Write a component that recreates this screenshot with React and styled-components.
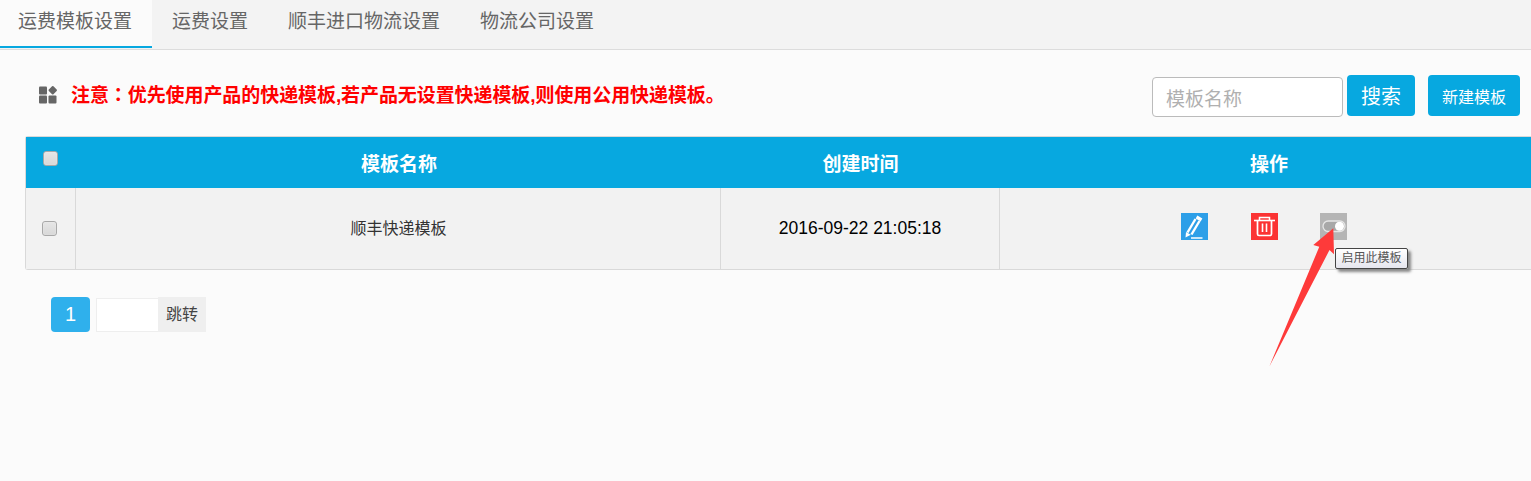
import React from 'react';
import styled, { createGlobalStyle } from 'styled-components';

const GlobalStyle = createGlobalStyle`
    html, body {
        margin: 0;
        padding: 0;
        background: #fbfbfb;
        font-family: "Liberation Sans", "Noto Sans CJK SC", sans-serif;
    }
`;

const Page = styled.div`
    width: 1531px;
    height: 481px;
    overflow: hidden;
    position: relative;
`;
const Tabs = styled.div`
    display: flex;
    height: 49px;
    background: #f3f3f3;
    border-bottom: 1px solid #dcdcdc;
`;
const Tab = styled.div`
    box-sizing: border-box;
    height: ${(p) => (p.$active ? '48px' : '49px')};
    padding: 0 20px;
    padding-left: ${(p) => (p.$active ? '18px' : '20px')};
    line-height: 43px;
    font-size: 19px;
    color: #666;
    background: ${(p) => (p.$active ? '#fbfbfb' : 'transparent')};
    border-bottom: ${(p) => (p.$active ? '2px solid #07a8e0' : 'none')};
`;
const Toolbar = styled.div`
    box-sizing: border-box;
    display: flex;
    align-items: flex-start;
    height: 86px;
    padding: 25px 11px 0 39px;
`;
const Notice = styled.div`
    display: flex;
    align-items: center;
    gap: 14px;
    height: 40px;
    flex-grow: 1;
    color: #ff0000;
    font-size: 19px;
    font-weight: bold;
`;
const NoticeText = styled.span`
    margin-bottom: 3px;
    letter-spacing: -0.08px;
`;
const Colon = styled.span`
    font-family: "Noto Sans CJK TC", sans-serif;
`;
const SearchInput = styled.div`
    box-sizing: border-box;
    width: 191px;
    height: 40px;
    margin: 2px 4px 0 0;
    padding-left: 13px;
    line-height: 44px;
    font-size: 19px;
    color: #b0b0b0;
    background: #fff;
    border: 1px solid #bbb;
    border-radius: 4px;
`;
const ActionButton = styled.div`
    box-sizing: border-box;
    width: ${(p) => p.$width}px;
    height: 41px;
    margin-left: ${(p) => p.$offset || 0}px;
    padding-top: 4px;
    line-height: 37px;
    text-align: center;
    color: #fff;
    font-size: ${(p) => p.$size}px;
    background: #07a8e0;
    border-radius: 4px;
`;
const Table = styled.div`
    margin-left: 25px;
    border-left: 1px solid #d9d9d9;
    border-top: 1px solid #d9d9d9;
    border-bottom: 1px solid #d9d9d9;
    border-radius: 3px 0 0 3px;
`;
const Row = styled.div`
    display: grid;
    grid-template-columns: 49px 645px 279px 1fr;
    height: ${(p) => p.$height}px;
    background: ${(p) => p.$bg};
`;
const HeadCell = styled.div`
    display: flex;
    align-items: center;
    justify-content: center;
    padding-left: ${(p) => p.$indent || 0}px;
    color: #fff;
    font-size: 19px;
    font-weight: bold;
`;
const Cell = styled.div`
    display: flex;
    align-items: center;
    justify-content: center;
    padding-left: ${(p) => p.$indent || 0}px;
    padding-bottom: ${(p) => p.$lift || 0}px;
    font-size: ${(p) => p.$size || 16}px;
    color: ${(p) => p.$color || '#333'};
    border-left: ${(p) => (p.$first ? 'none' : '1px solid #d9d9d9')};
`;
const Check = styled.span`
    box-sizing: border-box;
    display: block;
    width: 15px;
    height: 15px;
    background: linear-gradient(#e6e6e6, #d8d8d8);
    border: 1px solid #a8a8a8;
    border-radius: 3px;
    box-shadow: inset 0 0 1px #fff;
`;
const HeadCheck = styled(Check)`
    margin: -9px 0 0 0;
`;
const RowCheck = styled(Check)`
    margin: 0 0 0 -2px;
`;
const Ops = styled.div`
    display: flex;
    gap: 42.5px;
    margin-top: -4px;
    margin-left: -3px;
`;
const OpIcon = styled.div`
    width: 27px;
    height: 27px;
    background: ${(p) => p.$bg};
    svg {
        display: block;
    }
`;
const Pager = styled.div`
    display: flex;
    align-items: center;
    padding: 27px 0 0 51px;
`;
const PageNum = styled.div`
    width: 39px;
    height: 35px;
    line-height: 35px;
    text-align: center;
    color: #fff;
    font-size: 20px;
    background: #2fb0ec;
    border-radius: 4px;
`;
const PageInput = styled.div`
    box-sizing: border-box;
    width: 63px;
    height: 34px;
    margin-left: 6px;
    background: #fff;
    border: 1px solid #eee;
`;
const PageGo = styled.div`
    width: 48px;
    height: 35px;
    margin-left: -1px;
    line-height: 35px;
    text-align: center;
    font-size: 16px;
    color: #444;
    background: #efefef;
`;
const Tooltip = styled.div`
    position: absolute;
    left: 1335px;
    top: 248px;
    box-sizing: border-box;
    width: 73px;
    height: 21px;
    line-height: 19px;
    text-align: center;
    font-size: 12px;
    white-space: nowrap;
    color: #555;
    background: linear-gradient(#fff, #e6e6ee);
    border: 1px solid #444;
    border-radius: 2px;
    box-shadow: 3px 3px 3px #888;
`;
const Arrow = styled.svg`
    position: absolute;
    left: 1260px;
    top: 225px;
`;

const GridIcon = () => (
    <svg width="18" height="18" viewBox="0 0 18 18">
        <rect x="0" y="0.5" width="8" height="8" rx="1" fill="#666" />
        <rect x="10.5" y="1" width="6.5" height="6.5" rx="1" fill="#666" transform="rotate(45 13.75 4.25)" />
        <rect x="0" y="9.5" width="8" height="8" rx="1" fill="#666" />
        <rect x="9.5" y="9.5" width="8" height="8" rx="1" fill="#666" />
    </svg>
);

const PencilIcon = () => (
    <svg width="27" height="27" viewBox="0 0 27 27" fill="none" stroke="#fff">
        <path d="M6.5 19.5 L14.5 6" strokeWidth="2.4" />
        <path d="M10.5 21.5 L18.5 8" strokeWidth="2.4" />
        <path d="M15.5 4 L20.5 7" strokeWidth="3.4" />
        <path d="M4.5 24.5 L5 19 L9.8 21.8 Z" fill="#fff" stroke="none" />
        <path d="M10 25 H21.5" strokeWidth="1.5" />
    </svg>
);

const TrashIcon = () => (
    <svg width="27" height="27" viewBox="0 0 27 27" fill="none" stroke="#fff">
        <path d="M3 7.5 H24" strokeWidth="1.6" />
        <path d="M8.5 7 V4.5 H18.5 V7" strokeWidth="1.5" />
        <path d="M6.5 8 V21 Q6.5 22.5 8 22.5 H19 Q20.5 22.5 20.5 21 V8" strokeWidth="1.7" />
        <path d="M11.5 10.5 V19 M15.5 10.5 V19" strokeWidth="1.6" />
    </svg>
);

const ToggleIcon = () => (
    <svg width="27" height="27" viewBox="0 0 27 27" fill="none">
        <rect x="3" y="8" width="22" height="10.5" rx="5.2" stroke="#e6e6e6" strokeWidth="1.3" fill="#a8a8a8" />
        <circle cx="19.5" cy="13.2" r="4.5" fill="#fff" />
    </svg>
);

export default function App() {
    return (
        <Page>
            <GlobalStyle />
            <Tabs>
                <Tab $active>运费模板设置</Tab>
                <Tab>运费设置</Tab>
                <Tab>顺丰进口物流设置</Tab>
                <Tab>物流公司设置</Tab>
            </Tabs>
            <Toolbar>
                <Notice>
                    <GridIcon />
                    <NoticeText>注意<Colon>：</Colon>优先使用产品的快递模板,若产品无设置快递模板,则使用公用快递模板。</NoticeText>
                </Notice>
                <SearchInput>模板名称</SearchInput>
                <ActionButton $width={68} $size={20}>搜索</ActionButton>
                <ActionButton $width={92} $size={16} $offset={13}>新建模板</ActionButton>
            </Toolbar>
            <Table>
                <Row $height={51} $bg="#07a8e0">
                    <HeadCell><HeadCheck /></HeadCell>
                    <HeadCell $indent={3}>模板名称</HeadCell>
                    <HeadCell $indent={2}>创建时间</HeadCell>
                    <HeadCell $indent={8}>操作</HeadCell>
                </Row>
                <Row $height={81} $bg="#f2f2f2">
                    <Cell $first><RowCheck /></Cell>
                    <Cell $indent={1} $lift={3}>顺丰快递模板</Cell>
                    <Cell $size={17.5} $color="#000">2016-09-22 21:05:18</Cell>
                    <Cell>
                        <Ops>
                            <OpIcon $bg="#2d9fe8"><PencilIcon /></OpIcon>
                            <OpIcon $bg="#fb3333"><TrashIcon /></OpIcon>
                            <OpIcon $bg="#b5b5b5"><ToggleIcon /></OpIcon>
                        </Ops>
                    </Cell>
                </Row>
            </Table>
            <Pager>
                <PageNum>1</PageNum>
                <PageInput />
                <PageGo>跳转</PageGo>
            </Pager>
            <Arrow width="90" height="150" viewBox="0 0 90 150">
                <path d="M73.3 3.3 L53.3 20 L59.3 21.7 L9.3 141.7 L69.5 25 L74 29.3 Z" fill="#fe3a3a" />
            </Arrow>
            <Tooltip>启用此模板</Tooltip>
        </Page>
    );
}
